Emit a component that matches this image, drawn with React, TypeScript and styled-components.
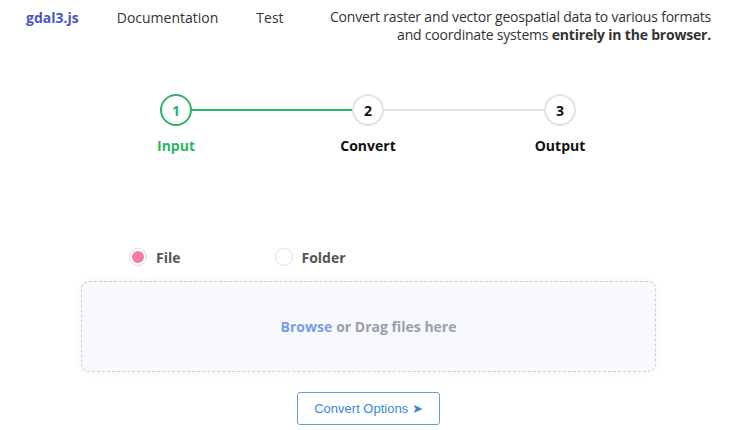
import React, { useState } from 'react';
import styled, { createGlobalStyle } from 'styled-components';

const GlobalStyle = createGlobalStyle`
  body {
    margin: 0;
    background: #ffffff;
    font-family: 'Open Sans', 'Noto Sans', sans-serif;
    color: #333333;
  }
`;

const Header = styled.header`
  display: flex;
  align-items: flex-start;
  box-sizing: border-box;
  padding: 8px 19px 0 26px;
  height: 44px;
`;

const Brand = styled.a`
  font-size: 14px;
  font-weight: 700;
  color: #4a56c0;
  line-height: 20px;
  margin-right: 38px;
`;

const NavItem = styled.a`
  font-size: 14px;
  color: #333333;
  line-height: 20px;
  margin-right: 38px;
`;

const Tagline = styled.p`
  margin: 0 0 0 auto;
  text-align: right;
  font-size: 14px;
  line-height: 18px;
  letter-spacing: -0.2px;
  white-space: nowrap;
  color: #333333;

  b {
    font-weight: 700;
  }
`;

const Stepper = styled.div`
  display: flex;
  flex-direction: column;
  padding: 50px 0 0 80px;
`;

const StepRow = styled.div`
  display: flex;
  align-items: center;
  padding-left: 80px;
`;

const Circle = styled.div<{ $active?: boolean }>`
  width: 32px;
  height: 32px;
  box-sizing: border-box;
  border-radius: 50%;
  border: 2px solid ${p => (p.$active ? '#2db46a' : '#e2e2e2')};
  display: flex;
  align-items: center;
  justify-content: center;
  font-size: 14px;
  font-weight: 700;
  color: ${p => (p.$active ? '#2db46a' : '#111111')};
  background: #ffffff;
`;

const Connector = styled.div<{ $done?: boolean }>`
  width: 160px;
  height: 2px;
  background: ${p => (p.$done ? '#2db46a' : '#e2e2e2')};
`;

const LabelRow = styled.div`
  display: flex;
  margin-top: 10px;
`;

const StepLabel = styled.div<{ $active?: boolean }>`
  width: 192px;
  text-align: center;
  font-size: 14px;
  font-weight: 700;
  line-height: 20px;
  color: ${p => (p.$active ? '#2db46a' : '#111111')};
`;

const Body = styled.section`
  display: flex;
  flex-direction: column;
  align-items: center;
  padding: 90px 0 0 7px;
`;

const RadioGroup = styled.div`
  display: flex;
  align-self: flex-start;
  margin-left: 122px;
  gap: 94px;
  height: 22px;
  align-items: center;
`;

const RadioOption = styled.label`
  display: flex;
  align-items: center;
  gap: 9px;
  font-size: 14px;
  font-weight: 700;
  color: #555555;
  cursor: pointer;
`;

const RadioDot = styled.span<{ $checked?: boolean }>`
  width: 18px;
  height: 18px;
  box-sizing: border-box;
  border-radius: 50%;
  border: 1px solid #dddddd;
  display: flex;
  align-items: center;
  justify-content: center;

  &::after {
    content: '';
    width: 12px;
    height: 12px;
    border-radius: 50%;
    background: ${p => (p.$checked ? '#f57ba3' : 'transparent')};
  }
`;

const DropZone = styled.div`
  margin-top: 13px;
  width: 575px;
  height: 91px;
  box-sizing: border-box;
  border: 1px dashed #cdcdd6;
  border-radius: 8px;
  background: #f8f9fd;
  box-shadow: 0 0 10px rgba(0, 0, 0, 0.04);
  display: flex;
  align-items: center;
  justify-content: center;
  font-size: 14px;
  font-weight: 700;
  color: #9a9eac;
`;

const Browse = styled.span`
  color: #7b9de6;
  margin-right: 4px;
  cursor: pointer;
`;

const OptionsButton = styled.button`
  margin-top: 20px;
  width: 143px;
  height: 33px;
  border: 1px solid #5d9fd8;
  border-radius: 3px;
  background: #ffffff;
  color: #3a87d4;
  font-family: 'Liberation Sans', Arial, sans-serif;
  font-size: 13px;
  cursor: pointer;
`;

export default function App() {
  const [mode, setMode] = useState<'file' | 'folder'>('file');

  return (
    <>
      <GlobalStyle />
      <Header>
        <Brand>gdal3.js</Brand>
        <NavItem>Documentation</NavItem>
        <NavItem>Test</NavItem>
        <Tagline>
          Convert raster and vector geospatial data to various formats
          <br />
          and coordinate systems <b>entirely in the browser.</b>
        </Tagline>
      </Header>

      <Stepper>
        <StepRow>
          <Circle $active>1</Circle>
          <Connector $done />
          <Circle>2</Circle>
          <Connector />
          <Circle>3</Circle>
        </StepRow>
        <LabelRow>
          <StepLabel $active>Input</StepLabel>
          <StepLabel>Convert</StepLabel>
          <StepLabel>Output</StepLabel>
        </LabelRow>
      </Stepper>

      <Body>
        <RadioGroup>
          <RadioOption onClick={() => setMode('file')}>
            <RadioDot $checked={mode === 'file'} />
            File
          </RadioOption>
          <RadioOption onClick={() => setMode('folder')}>
            <RadioDot $checked={mode === 'folder'} />
            Folder
          </RadioOption>
        </RadioGroup>
        <DropZone>
          <Browse>Browse</Browse> or Drag files here
        </DropZone>
        <OptionsButton>Convert Options ➤</OptionsButton>
      </Body>
    </>
  );
}
